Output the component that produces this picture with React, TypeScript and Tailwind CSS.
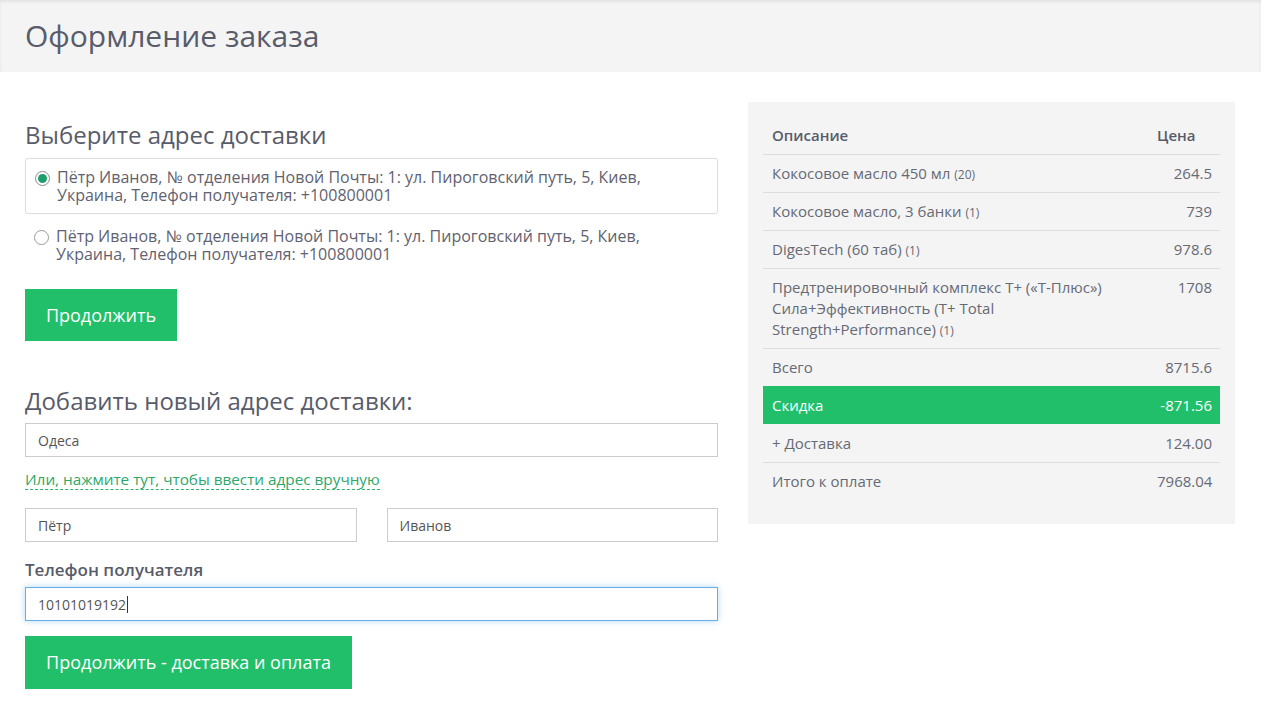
import React from "react";

const items = [
  { name: "Кокосовое масло 450 мл", qty: "(20)", price: "264.5" },
  { name: "Кокосовое масло, 3 банки", qty: "(1)", price: "739" },
  { name: "DigesTech (60 таб)", qty: "(1)", price: "978.6" },
  {
    name: "Предтренировочный комплекс T+ («Т-Плюс») Сила+Эффективность (T+ Total Strength+Performance)",
    qty: "(1)",
    price: "1708",
  },
];

const address =
  "Пётр Иванов, № отделения Новой Почты: 1: ул. Пироговский путь, 5, Киев, Украина, Телефон получателя: +100800001";

function Radio({ checked }: { checked?: boolean }) {
  return (
    <span
      className={
        "mt-[3px] flex h-[15px] w-[15px] shrink-0 items-center justify-center rounded-full border " +
        (checked ? "border-[#8a8a8a] bg-white" : "border-[#9a9a9a] bg-white")
      }
    >
      {checked && <span className="h-[9px] w-[9px] rounded-full bg-[#1e9e6a]" />}
    </span>
  );
}

function Row({ label, value, className }: { label: React.ReactNode; value: string; className: string }) {
  return (
    <div className={"grid grid-cols-[1fr_71px] border-t py-[8px] leading-[21px] " + className}>
      <span className="pl-[9px] pr-[20px]">{label}</span>
      <span className="px-[8px] text-right">{value}</span>
    </div>
  );
}

export default function App() {
  return (
    <div className="min-h-screen bg-white text-[#5a5d6b]" style={{ fontFamily: '"Open Sans", "Noto Sans", sans-serif' }}>
      <header className="flex h-[72px] items-center bg-[#f4f4f4] px-[25px] shadow-[inset_0_2px_3px_rgba(0,0,0,0.07)]">
        <h1 className="text-[30px] leading-none text-[#585c6a]">Оформление заказа</h1>
      </header>

      <main className="grid grid-cols-[693px_487px] gap-[30px] px-[25px] pt-[30px]">
        <section className="pt-[19px]">
          <h2 className="text-[24px] leading-[28px] text-[#585c6a]">Выберите адрес доставки</h2>

          <div className="mt-[9px] flex gap-[7px] rounded-[3px] border border-[#dedede] py-[9px] pl-[9px] pr-4 shadow-[0_0_2px_rgba(0,0,0,0.06)]">
            <Radio checked />
            <p className="text-[16px] leading-[18px] text-[#5f6270]">{address}</p>
          </div>
          <div className="mt-[13px] flex gap-[7px] px-[9px]">
            <Radio />
            <p className="text-[16px] leading-[18px] text-[#5f6270]">{address}</p>
          </div>

          <button className="mt-[26px] h-[52px] w-[152px] bg-[#21bf69] text-[18px] text-white">Продолжить</button>

          <h2 className="mt-[46px] text-[24px] leading-[28px] text-[#585c6a]">Добавить новый адрес доставки:</h2>

          <div className="mt-[8px] flex h-[34px] items-center border border-[#cccccc] px-[12px] text-[14px] text-[#555]">
            Одеса
          </div>

          <div className="mt-[10px]">
            <a className="border-b border-dashed border-[#2fae6e] text-[15.3px] leading-[20px] text-[#2ca86a]">
              Или, нажмите тут, чтобы ввести адрес вручную
            </a>
          </div>

          <div className="mt-[17px] grid grid-cols-2 gap-[30px]">
            <div className="flex h-[34px] items-center border border-[#cccccc] px-[12px] text-[14px] text-[#555]">Пётр</div>
            <div className="flex h-[34px] items-center border border-[#cccccc] px-[12px] text-[14px] text-[#555]">Иванов</div>
          </div>

          <label className="mt-[17px] block text-[17px] font-semibold leading-[22px] text-[#585c6a]">Телефон получателя</label>
          <div className="mt-[6px] flex h-[34px] items-center border border-[#66afe9] px-[12px] text-[14px] text-[#555] shadow-[0_0_6px_rgba(102,175,233,0.5)]">
            10101019192<span className="ml-px inline-block h-[17px] w-px bg-[#333]" />
          </div>

          <button className="mt-[15px] h-[53px] w-[327px] bg-[#21bf69] text-[18px] text-white">
            Продолжить - доставка и оплата
          </button>
        </section>

        <aside className="self-start bg-[#f4f4f4] px-[15px] pb-[24px] pt-[15px] text-[15px] text-[#666a74]">
          <div className="grid h-[37px] grid-cols-[1fr_71px] items-center font-semibold text-[#585c6a]">
            <span className="px-[9px]">Описание</span>
            <span className="px-[8px]">Цена</span>
          </div>
          {items.map((it) => (
            <Row
              key={it.name}
              className="border-[#dddddd]"
              label={
                <>
                  {it.name} <span className="text-[12px] leading-none">{it.qty}</span>
                </>
              }
              value={it.price}
            />
          ))}
          <Row className="border-[#dddddd]" label="Всего" value="8715.6" />
          <Row className="border-[#21bf69] bg-[#21bf69] text-white" label="Скидка" value="-871.56" />
          <Row className="border-transparent" label="+ Доставка" value="124.00" />
          <Row className="border-[#dddddd]" label="Итого к оплате" value="7968.04" />
        </aside>
      </main>
    </div>
  );
}
